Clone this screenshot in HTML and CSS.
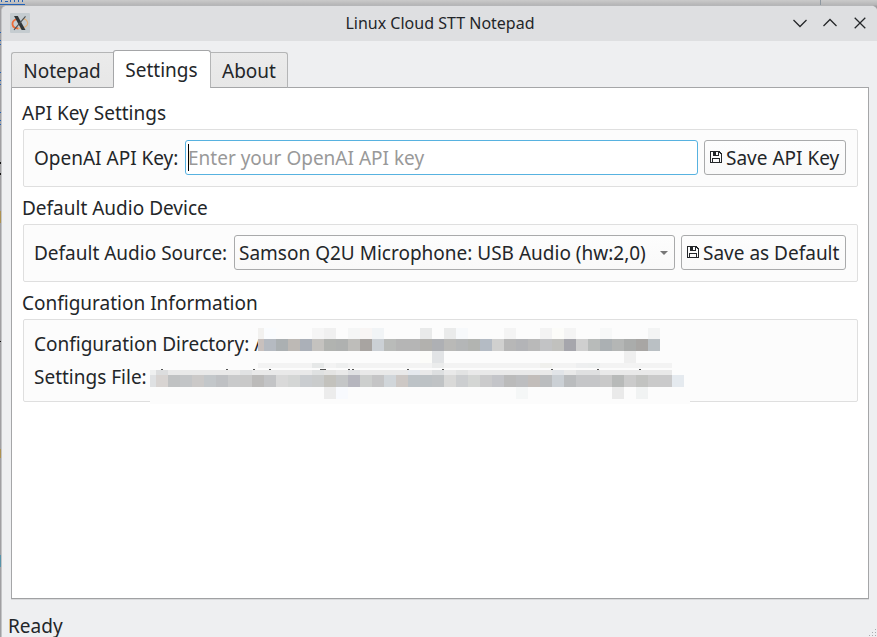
FILE: index.html
```html
<!DOCTYPE html>
<html lang="en">
<head>
<meta charset="utf-8">
<title>Linux Cloud STT Notepad</title>
<link rel="stylesheet" href="styles.css">
</head>
<body>
<svg class="backdrop" width="877" height="637" shape-rendering="crispEdges">
  <path fill="#2361b5" d="M0 4h25v1H0zM1 0h1v2H1zM5 1h3v1H5zM10 0h1v2h-1zM14 0h1v2h-1zM18 0h1v2h-1zM22 0h1v2h-1zM0 32h1v1H0zM0 40h1v1H0zM0 44h1v1H0zM0 72h1v1H0zM0 80h1v1H0zM0 84h1v1H0zM0 112h1v1H0zM0 120h1v1H0zM0 124h1v1H0z"/>
  <path fill="#111" d="M0 162h1v2H0zM0 173h1v2H0zM0 341h1v1H0z"/>
  <path fill="#ae9251" d="M0 211h1v12H0zM0 449h1v9H0z"/>
  <path fill="#5793a9" d="M0 555h1v12H0z"/>
  <path fill="#8e979f" d="M820 0h1v5h-1z"/>
</svg>
<div class="window">
  <header class="titlebar">
    <svg class="app-icon" width="20" height="20" viewBox="0 0 20 20">
      <rect width="20" height="20" rx="1" fill="#c5ccd0"/>
      <path d="M7 6C0.500 8 1 15 8.500 15.500" fill="none" stroke="#ee6c38" stroke-width="1.800"/>
      <path d="M13 5.500c5 1 6.500 6 2 8.500-2 1.300-4 1.500-7 1.500" fill="none" stroke="#e5b27b" stroke-width="1.200"/>
      <path d="M4 3h3.800l7.700 14h-3.800z" fill="#303638"/>
      <path d="M15.500 3.300L4 16.800" stroke="#4a5052" stroke-width="1.100"/>
    </svg>
    <h1 class="title">Linux Cloud STT Notepad</h1>
    <svg class="controls" width="76" height="16" viewBox="0 0 76 16" fill="none" stroke="#242729" stroke-width="1.250">
      <path d="M1.500 5l6.500 6.500L14.500 5M31.500 11L38 4.500l6.500 6.500M62.700 2.700l10.600 10.600M73.300 2.700L62.700 13.300"/>
    </svg>
  </header>
  <nav class="tabs">
    <div class="tab tab-notepad">Notepad</div>
    <div class="tab tab-active">Settings</div>
    <div class="tab tab-about">About</div>
  </nav>
  <main class="pane">
    <h2 class="heading">API Key Settings</h2>
    <section class="group">
      <div class="row">
        <label class="label-key">OpenAI API Key:</label>
        <div class="field"><span class="caret"></span><span class="placeholder">Enter your OpenAI API key</span></div>
        <div class="button button-key">
          <svg class="disk" width="12" height="12" viewBox="0 0 12 12" shape-rendering="crispEdges"><path fill="#232629" fill-rule="evenodd" d="M0 0h10v1h1v1h1v10H0zM1 1v10h1V7h8v4h1V3h-1V2H9v3H3V1zM3 8v3h6V8zM6 1v3h2V1z"/></svg>
          <span class="text">Save API Key</span>
        </div>
      </div>
    </section>
    <h2 class="heading">Default Audio Device</h2>
    <section class="group">
      <div class="row">
        <label class="label-source">Default Audio Source:</label>
        <div class="combo"><span class="text">Samson Q2U Microphone: USB Audio (hw:2,0)</span><svg class="arrow" width="8" height="4"><path d="M0 0h8L4 4z" fill="#777"/></svg></div>
        <div class="button button-default">
          <svg class="disk" width="12" height="12" viewBox="0 0 12 12" shape-rendering="crispEdges"><path fill="#232629" fill-rule="evenodd" d="M0 0h10v1h1v1h1v10H0zM1 1v10h1V7h8v4h1V3h-1V2H9v3H3V1zM3 8v3h6V8zM6 1v3h2V1z"/></svg>
          <span class="text">Save as Default</span>
        </div>
      </div>
    </section>
    <h2 class="heading">Configuration Information</h2>
    <section class="group group-info">
      <div class="info">Configuration Directory: /</div>
      <div class="info">Settings File:</div>
      <svg class="redaction" id="redaction" width="540" height="76" viewBox="150 328 540 76" shape-rendering="crispEdges"></svg>
    </section>
  </main>
  <footer class="status">
    <span>Ready</span>
    <svg class="grip" width="8" height="8" shape-rendering="crispEdges"><path fill="#aaacae" d="M6 0h1v1H6zM3 3h1v1H3zM6 3h1v1H6zM0 6h1v1H0zM3 6h1v1H3zM6 6h1v1H6z"/></svg>
  </footer>
</div>
<script src="redaction.js"></script>
</body>
</html>
```
FILE: styles.css
```css
* { box-sizing: border-box; }
body {
  margin: 0;
  width: 877px;
  height: 637px;
  overflow: hidden;
  padding: 5px 0 0 1px;
  background: linear-gradient(#cacaca, #b5b5b6 5px, #a09fa2 6px, #a09fa2);
  font: 19px/28px "Noto Sans", sans-serif;
  color: #232629;
}
.backdrop { position: absolute; left: 0; top: 0; }
.window {
  position: relative;
  height: 632px;
  display: flex;
  flex-direction: column;
  background: #eeeff1;
  border-left: 1px solid #c3c4c6;
  border-top: 1px solid #b5b6b8;
  border-radius: 6px 6px 0 0;
  overflow: hidden;
}
.titlebar {
  height: 35px;
  flex: none;
  display: flex;
  align-items: center;
  background: #dedfe1;
  padding: 0 8px 1px;
}
.app-icon { flex: none; }
.title {
  flex: 1;
  margin: 0 0 0 58px;
  text-align: center;
  font-weight: 400;
  font-size: 16px;
}
.controls { flex: none; margin-right: 1px; }
.tabs {
  height: 47px;
  flex: none;
  display: flex;
  align-items: flex-end;
  padding-left: 9px;
  position: relative;
  z-index: 1;
}
.tab {
  height: 36px;
  border: 1px solid #b4b5b6;
  border-bottom-color: #a5a6a8;
  border-radius: 3px 3px 0 0;
  background: linear-gradient(#ebebeb, #e7e7e7);
  text-align: center;
  line-height: 37px;
}
.tab-notepad {
  width: 103px;
  padding-right: 2px;
  border-right: 0;
  border-top-right-radius: 0;
}
.tab-active {
  width: 98px;
  height: 38px;
  margin-left: -1px;
  padding-right: 1px;
  line-height: 39px;
  background: #fff;
  border-color: #a5a6a8;
  border-bottom-color: #fff;
}
.tab-about { width: 78px; margin-left: -1px; border-top-left-radius: 0; }
.pane {
  height: 512px;
  flex: none;
  margin: -1px 8px 0 9px;
  border: 1px solid #a5a6a8;
  border-bottom-color: #a0a1a3;
  background: #fff;
  padding: 11px 10px 0 11px;
  box-shadow: 0 1px #d9dadc;
}
.heading {
  height: 30px;
  margin: 0 0 0 -1px;
  font-size: inherit;
  font-weight: 400;
  line-height: 28px;
}
.group {
  height: 58px;
  border: 1px solid #dfdfdf;
  border-radius: 2px;
  background: #fcfcfc;
  padding: 10px 11px 0 10px;
  margin-bottom: 7px;
}
.row { display: flex; height: 35px; line-height: 37px; white-space: nowrap; }
.label-key { width: 151px; flex: none; }
.label-source { width: 200px; flex: none; }
.field {
  width: 513px;
  border: 1px solid #57b2e0;
  border-radius: 3px;
  background: #fff;
  display: flex;
  align-items: center;
  padding-left: 2px;
}
.caret { width: 1px; height: 27px; margin-right: -1px; background: #000; }
.placeholder { color: #999; }
.placeholder, .text { line-height: 28px; padding-top: 1px; }
.button, .combo {
  display: flex;
  align-items: center;
  border: 1px solid #a9aaab;
  border-radius: 3px;
  background: linear-gradient(#fdfdfd, #f9f9f9);
}
.button { margin-left: 6px; padding-left: 5px; gap: 4px; }
.button-key { width: 142px; }
.button-default { width: 165px; }
.disk { flex: none; margin-top: -1px; }
.combo { width: 441px; justify-content: space-between; padding: 0 6px 0 4px; }
.arrow { flex: none; }
.group-info { position: relative; height: 83px; padding-top: 10px; }
.info { height: 33px; white-space: pre; }
.redaction { position: absolute; left: 126px; top: 8px; }
.status {
  height: 37px;
  flex: none;
  padding: 13px 0 0 6px;
  display: flex;
  justify-content: space-between;
  line-height: 28px;
}
.grip { margin: 17px 0 0; flex: none; }
```
FILE: redaction.js
```js
// Mosaic cells that hide the user's paths. Each cell is 12px wide, the first is 6px.
const svg = document.getElementById('redaction');
function block(x, y, w, h, fill) {
  const r = document.createElementNS('http://www.w3.org/2000/svg', 'rect');
  for (const [k, v] of Object.entries({ x, y, width: w, height: h, fill })) r.setAttribute(k, v);
  svg.appendChild(r);
}
function strip(start, y, h, colors) {
  colors.split(' ').forEach((c, i) => block(i ? start + 12 * i - 6 : start, y, i ? 12 : 6, h, '#' + c));
}
function cells(y, h, list) {
  for (const [x, c, w = 12] of list) block(x, y, w, h, '#' + c);
}
block(258, 328, 414, 40, '#fcfcfc');
block(150, 370, 540, 34, '#fcfcfc');
cells(328, 11, [[258,'f2f1ef',6],[264,'fafcfe'],[312,'f5f5f5'],[324,'f0f0f0'],[348,'f5f6f6'],[360,'f8f5f4'],[372,'f1f4f6'],[420,'e9eaea'],[444,'eaebeb'],[456,'f7f9fb'],[504,'f4f4f4'],[540,'f3f3f3'],[552,'fcfcf9'],[564,'f4f4f4'],[600,'f7f8f8'],[648,'f3f4f4']]);
strip(258, 339, 12, 'c8c0bd b5bac1 abb0b2 bdb9b5 abb0b8 c4c2bf b1b3b0 afb1b0 bebdba a8a4a1 cbd0d5 b9bbb9 b5b5b5 b5b5b5 b2b1ae aeb0b4 b9b9b7 b4b6b7 b2b4b1 b4bbc4 d0d0cf b7b7b7 b3b4b7 b9b9b9 c2c3c5 c1c1be a6a6ac cfcfcf b8bbba abb0b3 b4b6b5 aaacab a8a6a4 bac0c4');
cells(351, 12, [[420,'fcfcf9'],[432,'e2e4e6'],[624,'efefef']]);
cells(363, 5, [[258,'f3f3f3',414],[312,'e6e8e8'],[336,'eeefef'],[432,'ebecec'],[540,'f0f0ed'],[576,'eeeff0'],[588,'edefef']]);
cells(369, 1, [[161,'555',2],[226,'555',2],[253,'555',2],[269,'555',2],[320,'555',6],[348,'555',2],[352,'555',2],[407,'555',2],[442,'555',2],[551,'555',2],[597,'555',2],[639,'555',2]]);
cells(370, 5, [[150,'eff0f0',6],[156,'dcddde'],[168,'e9e9e9',504],[240,'e1e2e3'],[312,'dfe1e1'],[324,'e4e4e3'],[348,'e0e1e3'],[408,'e5e9ee'],[432,'dddfe0'],[456,'e2e3e3'],[552,'e1e4e8'],[576,'dfe0e1',24]]);
strip(150, 375, 12, 'dfe1e3 d8d4d2 c0c2c3 c3c5c7 cbc9c8 c3c7ca bfc1c4 c9cacb c9c9c9 bcbbba c3c4c6 d9d9d9 d4d6d5 cacdd0 cacccc c3c2bd c4c6c7 b6b6be cdcfce c5c5c6 d1d6da cdc8c5 bdc3c7 bdc2c5 c0c3c5 d9d9d8 ccced0 d4d6d4 cbcbcc c4c5c9 bbbbbb bdbec0 c2bdba bbbdbf cbd0d5 babcbe c5c6c8 c5c6c8 c9c9c9 b8bab9 cbcbcb c2c3c1 cacaca cacacb e5eaef');
cells(387, 12, [[324,'ececec'],[336,'f8fafe'],[516,'f5f7f7'],[612,'eaeaea'],[636,'f1f3f3']]);
```
